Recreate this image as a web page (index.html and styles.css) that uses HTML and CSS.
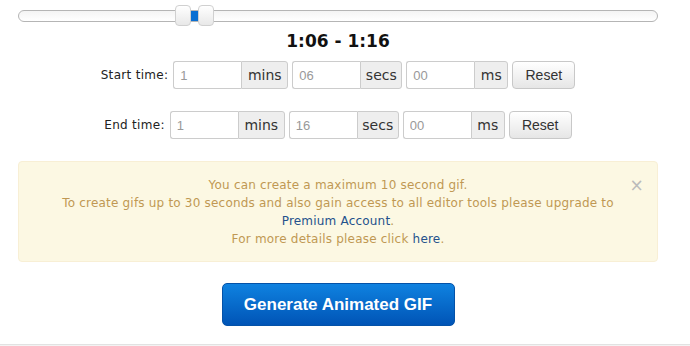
FILE: index.html
```html
<!DOCTYPE html>
<html lang="en">
<head>
    <meta charset="UTF-8">
    <meta name="viewport" content="width=device-width, initial-scale=1.0">
    <title>Trim GIF</title>
    <link rel="stylesheet" href="styles.css">
</head>
<body>

    <div class="page">
        <!-- Range Slider -->
        <div class="slider">
            <div class="track">
                <span class="range"></span>
                <span class="handle handle-start"></span>
                <span class="handle handle-end"></span>
            </div>
        </div>

        <h2 class="range-label">1:06 - 1:16</h2>

        <!-- Time Inputs -->
        <div class="times">
            <div class="time-row">
                <label class="time-label">Start time:</label>
                <div class="input-group">
                    <input class="field" type="text" value="1">
                    <span class="addon addon-mins">mins</span>
                </div>
                <div class="input-group">
                    <input class="field" type="text" value="06">
                    <span class="addon addon-secs">secs</span>
                </div>
                <div class="input-group">
                    <input class="field" type="text" value="00">
                    <span class="addon addon-ms">ms</span>
                </div>
                <button class="btn">Reset</button>
            </div>
            <div class="time-row">
                <label class="time-label">End time:</label>
                <div class="input-group">
                    <input class="field" type="text" value="1">
                    <span class="addon addon-mins">mins</span>
                </div>
                <div class="input-group">
                    <input class="field" type="text" value="16">
                    <span class="addon addon-secs">secs</span>
                </div>
                <div class="input-group">
                    <input class="field" type="text" value="00">
                    <span class="addon addon-ms">ms</span>
                </div>
                <button class="btn">Reset</button>
            </div>
        </div>

        <!-- Upgrade Notice -->
        <div class="alert">
            <span class="close">&times;</span>
            You can create a maximum 10 second gif.<br>
            To create gifs up to 30 seconds and also gain access to all editor tools please upgrade to<br>
            <a href="#">Premium Account</a>.<br>
            For more details please click <a href="#">here</a>.
        </div>

        <div class="actions">
            <button class="btn-primary">Generate Animated GIF</button>
        </div>
    </div>

    <div class="footer"></div>

</body>
</html>
```

FILE: styles.css
```css
/* Page */
body {
    margin: 0;
    background: #fff;
    font-family: "DejaVu Sans", Verdana, sans-serif;
    color: #333;
}

.page {
    padding: 10px 32px 0 18px;
}

/* Range Slider */
.track {
    position: relative;
    height: 10px;
    border: 1px solid #b5b5b5;
    border-radius: 6px;
    background: linear-gradient(to bottom, #f4f4f4, #fff);
}

.track .range {
    position: absolute;
    left: 172px;
    top: 0;
    width: 8px;
    height: 10px;
    background: #0a6fd2;
}

.track .handle {
    position: absolute;
    top: -6px;
    width: 14px;
    height: 19px;
    border: 1px solid #d0d0d0;
    border-radius: 4px;
    background: linear-gradient(to bottom, #fff, #e8e8e8);
}

.track .handle-start {
    left: 156px;
}

.track .handle-end {
    left: 179px;
}

/* Range Label */
.range-label {
    margin: 9px 0 0;
    font-size: 17px;
    line-height: 20px;
    font-weight: bold;
    text-align: center;
    color: #111;
}

/* Time Rows */
.times {
    margin-top: 10px;
    display: flex;
    flex-direction: column;
    gap: 22px;
}

.time-row {
    display: flex;
    justify-content: center;
    align-items: center;
    gap: 4px;
    height: 28px;
}

.time-label {
    font-size: 12px;
    letter-spacing: 0.3px;
    color: #222;
    margin-right: 1px;
}

.input-group {
    display: flex;
    height: 28px;
}

.field {
    box-sizing: border-box;
    width: 68px;
    height: 28px;
    margin: 0;
    padding: 0 6px;
    border: 1px solid #ccc;
    border-right: none;
    border-radius: 3px 0 0 3px;
    font-family: "Liberation Sans", Arial, sans-serif;
    font-size: 13px;
    color: #999;
    background: #fff;
}

.addon {
    box-sizing: border-box;
    display: flex;
    align-items: center;
    justify-content: center;
    height: 28px;
    border: 1px solid #ccc;
    border-radius: 0 3px 3px 0;
    background: #eee;
    font-size: 14px;
    color: #333;
}

.addon-mins {
    width: 47px;
}

.addon-secs {
    width: 42px;
}

.addon-ms {
    width: 34px;
}

.btn {
    box-sizing: border-box;
    width: 63px;
    height: 28px;
    margin: 0;
    border: 1px solid #c8c8c8;
    border-radius: 4px;
    background: linear-gradient(to bottom, #fff, #e6e6e6);
    font-family: "Liberation Sans", Arial, sans-serif;
    font-size: 14px;
    color: #333;
}

/* Alert */
.alert {
    position: relative;
    margin-top: 22px;
    box-sizing: border-box;
    height: 101px;
    padding: 14px 35px 0;
    border: 1px solid #f8efd5;
    border-radius: 4px;
    background: #fcf8e3;
    color: #c09853;
    font-size: 12px;
    letter-spacing: 0.2px;
    line-height: 18px;
    text-align: center;
}

.alert a {
    color: #24518c;
    text-decoration: none;
}

.alert .close {
    position: absolute;
    top: 14px;
    right: 13px;
    font-size: 17px;
    line-height: 18px;
    color: #bbb;
}

/* Generate Button */
.actions {
    display: flex;
    justify-content: center;
    margin-top: 21px;
}

.btn-primary {
    width: 233px;
    height: 43px;
    margin: 0;
    border: 1px solid #0452a8;
    border-radius: 5px;
    background: linear-gradient(to bottom, #0f82e0, #0054b6);
    font-family: "Liberation Sans", Arial, sans-serif;
    font-size: 17px;
    font-weight: bold;
    color: #fff;
}

/* Footer strip */
.footer {
    margin-top: 18px;
    height: 2px;
    border-top: 1px solid #e2e2e2;
    background: #f3f3f3;
}
```
